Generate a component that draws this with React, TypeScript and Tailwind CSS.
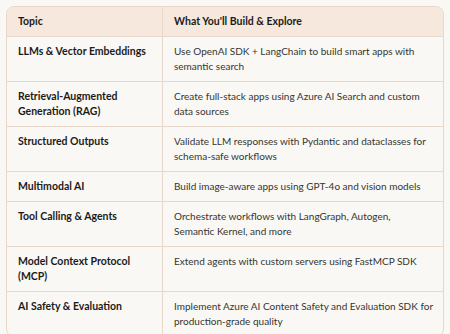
import React from "react";

const rows: [string, React.ReactNode][] = [
  ["LLMs & Vector Embeddings", "Use OpenAI SDK + LangChain to build smart apps with semantic search"],
  ["Retrieval-Augmented Generation (RAG)", "Create full-stack apps using Azure AI Search and custom data sources"],
  ["Structured Outputs", "Validate LLM responses with Pydantic and dataclasses for schema-safe workflows"],
  ["Multimodal AI", "Build image-aware apps using GPT-4o and vision models"],
  ["Tool Calling & Agents", <>Orchestrate workflows with LangGraph, Autogen,<br />Semantic Kernel, and more</>],
  ["Model Context Protocol (MCP)", "Extend agents with custom servers using FastMCP SDK"],
  ["AI Safety & Evaluation", "Implement Azure AI Content Safety and Evaluation SDK for production-grade quality"],
];

export default function App() {
  return (
    <div className="w-[450px] h-[334px] bg-[#f9f8f5] pt-[6px] pl-[6px]" style={{ fontFamily: "Lato, 'Noto Sans', sans-serif" }}>
      <div className="w-[438px] rounded-[8px] border border-[#e8d8cb] overflow-hidden bg-[#f9f8f5] text-[10.5px] leading-[15px]">
        <div className="grid grid-cols-[156px_1fr] bg-[#f6e8dd] border-b border-[#e8d8cb]">
          <div className="px-[11px] py-[7px] font-bold text-[#1c1b19] border-r border-[#e8d8cb]">Topic</div>
          <div className="pl-[11px] pr-[6px] py-[7px] font-bold text-[#1c1b19]">What You'll Build &amp; Explore</div>
        </div>
        {rows.map(([t, d], i) => (
          <div key={i} className={"grid grid-cols-[156px_1fr]" + (i < rows.length - 1 ? " border-b border-[#e8d8cb]" : "")}>
            <div className="px-[11px] pt-[7px] pb-[7px] font-bold text-[#1c1b19] border-r border-[#e8d8cb]">{t}</div>
            <div className="pl-[11px] pr-[6px] pt-[7px] pb-[7px] text-[10px] text-[#36352f]">{d}</div>
          </div>
        ))}
      </div>
    </div>
  );
}
